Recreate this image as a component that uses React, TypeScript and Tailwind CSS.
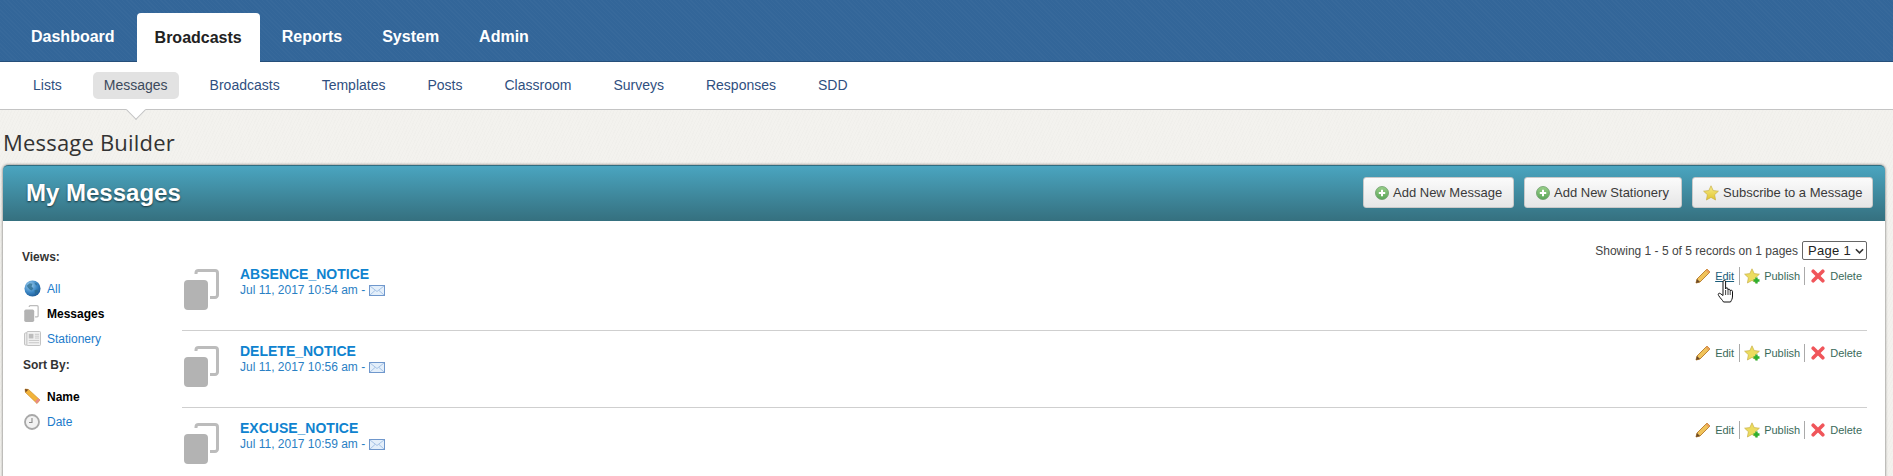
import React from "react";

const Stack = ({ className = "" }: { className?: string }) => (
  <svg viewBox="0 0 35 41" className={className}>
    <path d="M12 5 V4 a2.5 2.5 0 0 1 2.5-2.5 H31 a2.5 2.5 0 0 1 2.5 2.5 V26 a2.5 2.5 0 0 1-2.5 2.5 H26" fill="none" stroke="#bcbcbc" strokeWidth="3" />
    <rect x="0" y="11" width="24" height="30" rx="4" fill="#b3b3b3" />
  </svg>
);

const Globe = () => (
  <svg viewBox="0 0 18 18" className="w-[17px] h-[17px]">
    <defs>
      <radialGradient id="g1" cx="35%" cy="30%" r="75%">
        <stop offset="0" stopColor="#9fd0f0" />
        <stop offset="0.6" stopColor="#3b86c4" />
        <stop offset="1" stopColor="#1d5a94" />
      </radialGradient>
    </defs>
    <circle cx="9" cy="9" r="8.5" fill="url(#g1)" />
    <path d="M3 6 L6 3.5 L9 4 L8 7 L10 9 L8 11 L6 10 L4 8 Z M11 11 L14 10 L15 12 L12 15 Z M11 3 L14 4 L13 6 Z" fill="#2a6a8c" opacity="0.75" />
  </svg>
);

const Newspaper = () => (
  <svg viewBox="0 0 18 16" className="w-[17px] h-[15px]">
    <rect x="0.5" y="2" width="3.5" height="13" rx="1" fill="#eee" stroke="#bdbdbd" />
    <rect x="3" y="0.5" width="14.5" height="15" rx="1" fill="#f2f2f2" stroke="#bdbdbd" />
    <rect x="5" y="3" width="5" height="5" fill="#bdbdbd" />
    <path d="M11.5 3.5H16M11.5 5.5H16M11.5 7.5H16M5 10H16M5 12.5H16" stroke="#c4c4c4" />
  </svg>
);

const SidePencil = () => (
  <svg viewBox="0 0 17 17" className="w-[17px] h-[17px]">
    <path d="M1 1 L4.5 1.5 L16 12 L13 15.5 L1.5 4.5 Z" fill="#f2b33a" stroke="#c98a20" strokeWidth="0.6" />
    <path d="M1 1 L4.5 1.5 L1.5 4.5 Z" fill="#7a4a20" />
    <path d="M14 10.2 L16 12 L13 15.5 L11.2 13.6 Z" fill="#e88a8a" />
  </svg>
);

const Clock = () => (
  <svg viewBox="0 0 16 16" className="w-[16px] h-[16px]">
    <circle cx="8" cy="8" r="7" fill="#f2f2f2" stroke="#a8a8a8" strokeWidth="1.8" />
    <path d="M8 4 V8.5 H5" fill="none" stroke="#8a8a8a" strokeWidth="1.1" />
  </svg>
);

const Mail = () => (
  <svg viewBox="0 0 16 11" className="w-[16px] h-[11px] shrink-0">
    <rect x="0.5" y="0.5" width="15" height="10" fill="#e4effa" stroke="#6f97cc" />
    <path d="M1 1 L8 6.5 L15 1 M1 10 L6 5.5 M15 10 L10 5.5" fill="none" stroke="#a6c3e6" />
  </svg>
);

const PlusCircle = () => (
  <svg viewBox="0 0 14 14" className="w-[14px] h-[14px] shrink-0">
    <defs>
      <linearGradient id="p1" x1="0" y1="0" x2="0" y2="1">
        <stop offset="0" stopColor="#9ad08a" />
        <stop offset="1" stopColor="#5aa558" />
      </linearGradient>
    </defs>
    <circle cx="7" cy="7" r="6.5" fill="url(#p1)" stroke="#6a9a68" strokeWidth="0.8" />
    <path d="M7 3.8 V10.2 M3.8 7 H10.2" stroke="#fff" strokeWidth="2" />
  </svg>
);

const starPath = "M8 0.8 L10.2 5.6 L15.4 6.2 L11.6 9.7 L12.6 15 L8 12.4 L3.4 15 L4.4 9.7 L0.6 6.2 L5.8 5.6 Z";

const Star = () => (
  <svg viewBox="0 0 16 16" className="w-[16px] h-[16px] shrink-0">
    <defs>
      <linearGradient id="s1" x1="0" y1="0" x2="0" y2="1">
        <stop offset="0" stopColor="#f6ec8a" />
        <stop offset="1" stopColor="#e2c52e" />
      </linearGradient>
    </defs>
    <path d={starPath} fill="url(#s1)" stroke="#c9b04a" strokeWidth="0.7" />
  </svg>
);

const StarPlus = () => (
  <svg viewBox="0 0 17 17" className="w-[17px] h-[17px] shrink-0">
    <path d={starPath} fill="#ecdc5e" stroke="#c9b04a" strokeWidth="0.7" />
    <path d="M12.5 9.5 V15.5 M9.5 12.5 H15.5" stroke="#2fae2f" strokeWidth="2.4" />
  </svg>
);

const PencilSmall = () => (
  <svg viewBox="0 0 16 16" className="w-[16px] h-[16px] shrink-0">
    <path d="M12 1 L15 4 L5 14 L1 15 L2 11 Z" fill="#f0c35a" stroke="#b5792a" strokeWidth="0.9" />
    <path d="M1 15 L2 11 L5 14 Z" fill="#6b4a2a" />
    <path d="M12 1 L15 4 L13.5 5.5 L10.5 2.5 Z" fill="#e8a05a" />
  </svg>
);

const RedX = () => (
  <svg viewBox="0 0 14 14" className="w-[14px] h-[14px] shrink-0">
    <path d="M2.2 2.2 L11.8 11.8 M11.8 2.2 L2.2 11.8" stroke="#f0555a" strokeWidth="3.6" strokeLinecap="round" />
  </svg>
);

const Hand = () => (
  <svg viewBox="0 0 17 24" className="w-[17px] h-[24px]">
    <path
      d="M6 1.8 a1.3 1.3 0 0 1 2.6 0 V9 a1.2 1.2 0 0 1 2.4 0 V10 a1.2 1.2 0 0 1 2.2 0 V11 a1.2 1.2 0 0 1 2.3 .3 V16 c0 3-1 4-2 6 H6.5 C5.5 20 3.5 18.5 1.6 15.5 C.6 14 1.9 12.5 3.4 13.6 L6 15.5 Z"
      fill="#fff"
      stroke="#111"
      strokeWidth="1"
      strokeLinejoin="round"
    />
    <path d="M8.6 10 V15 M11 10 V15 M13.2 11 V15" stroke="#111" strokeWidth="0.8" />
  </svg>
);

const tabs = ["Dashboard", "Broadcasts", "Reports", "System", "Admin"];
const subs = ["Lists", "Messages", "Broadcasts", "Templates", "Posts", "Classroom", "Surveys", "Responses", "SDD"];
const rows = [
  ["ABSENCE_NOTICE", "Jul 11, 2017 10:54 am -"],
  ["DELETE_NOTICE", "Jul 11, 2017 10:56 am -"],
  ["EXCUSE_NOTICE", "Jul 11, 2017 10:59 am -"],
];

const SideItem = ({ icon, label, active }: { icon: React.ReactNode; label: string; active?: boolean }) => (
  <div className="flex items-center h-[25px]">
    <span className="w-[25px] pl-[2px] flex items-center">{icon}</span>
    <span className={active ? "text-[12px] font-bold text-black" : "text-[12px] text-[#1b7bcb]"}>{label}</span>
  </div>
);

const HeadButton = ({ icon, label, className }: { icon: React.ReactNode; label: string; className: string }) => (
  <button className={`flex items-center gap-[4px] h-[31px] rounded-[3px] border border-[#c9c9c9] bg-gradient-to-b from-[#fbfbfb] to-[#e6e6e6] text-[13px] text-[#3a3a3a] ${className}`}>
    {icon}
    <span>{label}</span>
  </button>
);

export default function App() {
  return (
    <div className="w-[1893px] h-[476px] overflow-hidden bg-[#f3f2ee] bg-[repeating-linear-gradient(115deg,rgba(0,0,0,0.012)_0px,rgba(0,0,0,0.012)_1px,transparent_1px,transparent_3px)] font-['Liberation_Sans',Arial,sans-serif]">
      <nav className="h-[62px] bg-[#336699] bg-[repeating-linear-gradient(45deg,rgba(255,255,255,0.02)_0px,rgba(255,255,255,0.02)_1px,transparent_1px,transparent_3px)] border-b border-[#264f7a] flex items-end pl-[13px] gap-[4px]">
        {tabs.map((t) => (
          <div
            key={t}
            className={
              t === "Broadcasts"
                ? "h-[49px] -mb-px px-[18px] flex items-center bg-white rounded-t-[4px] text-[16px] font-bold text-[#222]"
                : "h-[49px] px-[18px] flex items-center text-[16px] font-bold text-white"
            }
          >
            {t}
          </div>
        ))}
      </nav>

      <div className="relative h-[48px] bg-white border-b border-[#c4c4c4] flex items-center pl-[22px] gap-[20px]">
        {subs.map((s) => (
          <div
            key={s}
            className={
              s === "Messages"
                ? "h-[27px] px-[11px] flex items-center rounded-[5px] bg-[#e2e2e2] text-[14px] text-[#3c4a5c]"
                : "h-[27px] px-[11px] flex items-center text-[14px] text-[#2f4f7f]"
            }
          >
            {s}
          </div>
        ))}
        <div className="absolute left-[129px] top-[41px] w-[14px] h-[14px] rotate-45 bg-white border-r border-b border-[#c4c4c4]" />
      </div>

      <h1 className="h-[55px] pl-[3px] pt-[15px] text-[22px] leading-[34px] tracking-[0.2px] text-[#333] font-['Open_Sans',sans-serif]">
        Message Builder
      </h1>

      <section className="ml-[3px] mr-[8px] h-[400px] bg-white rounded-t-[5px] shadow-[0_0_3px_rgba(0,0,0,0.6)]">
        <header className="h-[56px] pb-[2px] rounded-t-[5px] border-t border-[#2f6d80] bg-gradient-to-b from-[#4aa5c0] to-[#35707f] flex items-center pl-[23px] pr-[12px]">
          <h2 className="text-[24px] font-bold text-white [text-shadow:0_1px_2px_rgba(0,0,0,0.6)]">My Messages</h2>
          <div className="ml-auto flex items-center gap-[10px]">
            <HeadButton icon={<PlusCircle />} label="Add New Message" className="w-[151px] pl-[11px]" />
            <HeadButton icon={<PlusCircle />} label="Add New Stationery" className="w-[158px] pl-[11px]" />
            <HeadButton icon={<Star />} label="Subscribe to a Message" className="w-[181px] pl-[10px]" />
          </div>
        </header>

        <div className="flex">
          <aside className="w-[179px] pl-[19px] pt-[28px] shrink-0">
            <div className="text-[12px] font-bold text-[#333] leading-[16px] mb-[11px]">Views:</div>
            <SideItem icon={<Globe />} label="All" />
            <SideItem icon={<Stack className="w-[15px] h-[17px]" />} label="Messages" active />
            <SideItem icon={<Newspaper />} label="Stationery" />
            <div className="text-[12px] font-bold text-[#333] leading-[16px] mt-[6px] mb-[11px] pl-[1px]">Sort By:</div>
            <SideItem icon={<SidePencil />} label="Name" active />
            <SideItem icon={<Clock />} label="Date" />
          </aside>

          <main className="flex-1 pr-[18px]">
            <div className="h-[33px] pt-[26px] flex items-center justify-end gap-[4px] text-[12px] text-[#444]">
              <span>Showing 1 - 5 of 5 records on 1 pages</span>
              <span className="h-[19px] w-[65px] border border-[#666] rounded-[2px] pl-[5px] flex items-center gap-[4px] text-[13px] tracking-[0.3px] text-[#222]">
                Page 1
                <svg viewBox="0 0 10 6" className="w-[9px] h-[6px]">
                  <path d="M1 1 L5 5 L9 1" fill="none" stroke="#333" strokeWidth="1.8" />
                </svg>
              </span>
            </div>
            {rows.map(([name, date], i) => (
              <div key={name} className="relative h-[77px] border-b border-[#cfcfcf] flex items-start pl-[2px]">
                <Stack className="mt-[15px] w-[35px] h-[41px]" />
                <div className="ml-[21px] pt-[13px]">
                  <div className="text-[14px] leading-[15px] font-bold text-[#0f83cf]">{name}</div>
                  <div className="flex items-center gap-[4px] text-[12px] leading-[16px] text-[#2a80c4]">
                    <span>{date}</span>
                    <Mail />
                  </div>
                </div>
                <div className="ml-auto pr-[5px] pt-[13px] flex items-center text-[11px] text-[#3a6a5a]">
                  <PencilSmall />
                  <span className={i === 0 ? "ml-[4px] pr-[5px] underline text-[#1a5c7a]" : "ml-[4px] pr-[5px]"}>Edit</span>
                  <span className="h-[18px] border-l border-[#aaa]" />
                  <span className="ml-[4px]"><StarPlus /></span>
                  <span className="ml-[3px] pr-[4px]">Publish</span>
                  <span className="h-[18px] border-l border-[#aaa]" />
                  <span className="ml-[6px]"><RedX /></span>
                  <span className="ml-[5px]">Delete</span>
                </div>
                {i === 0 && (
                  <div className="absolute right-[133px] top-[26px]">
                    <Hand />
                  </div>
                )}
              </div>
            ))}
          </main>
        </div>
      </section>
    </div>
  );
}
